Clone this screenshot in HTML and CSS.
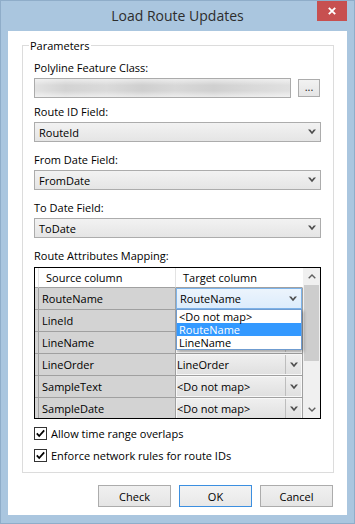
FILE: index.html
```html
<!DOCTYPE html>
<html>
<head>
<meta charset="utf-8">
<link rel="stylesheet" href="styles.css">
</head>
<body>
<div class="window">
  <div class="titlebar">
    <div class="title">Load Route Updates</div>
    <div class="close"><svg width="8" height="8" viewBox="0 0 8 8"><path d="M0.8 0.8L7.2 7.2M7.2 0.8L0.8 7.2" stroke="#fff" stroke-width="1.9"/></svg></div>
  </div>
  <div class="client">
    <fieldset class="group">
      <legend class="group-title">Parameters</legend>
      <div class="lbl">Polyline Feature Class:</div>
      <div class="filerow">
        <div class="textbox"></div>
        <div class="browse">...</div>
      </div>
      <div class="lbl">Route ID Field:</div>
      <div class="combo"><span class="combo-text">RouteId</span><svg class="chev" width="8" height="6" viewBox="0 0 8 6"><path d="M0 0.5h2.2L4 2.7 5.8 0.5H8L4 5.3z" fill="#4d4d4d"/></svg></div>
      <div class="lbl">From Date Field:</div>
      <div class="combo"><span class="combo-text">FromDate</span><svg class="chev" width="8" height="6" viewBox="0 0 8 6"><path d="M0 0.5h2.2L4 2.7 5.8 0.5H8L4 5.3z" fill="#4d4d4d"/></svg></div>
      <div class="lbl">To Date Field:</div>
      <div class="combo"><span class="combo-text">ToDate</span><svg class="chev" width="8" height="6" viewBox="0 0 8 6"><path d="M0 0.5h2.2L4 2.7 5.8 0.5H8L4 5.3z" fill="#4d4d4d"/></svg></div>
      <div class="lbl lbl-grid">Route Attributes Mapping:</div>
      <div class="grid">
        <div class="table">
          <div class="row head">
            <div class="rh"></div>
            <div class="hc src">Source column</div>
            <div class="hc tgt">Target column</div>
          </div>
          <div class="row">
            <div class="rh"></div>
            <div class="sc">RouteName</div>
            <div class="tc"><div class="editcombo"><span class="combo-text">RouteName</span><svg class="chev" width="8" height="6" viewBox="0 0 8 6"><path d="M0 0.5h2.2L4 2.7 5.8 0.5H8L4 5.3z" fill="#4d4d4d"/></svg></div></div>
          </div>
          <div class="row">
            <div class="rh"></div>
            <div class="sc">LineId</div>
            <div class="tc"><div class="ccell"><span class="ctext"></span><span class="cbtn"></span></div></div>
          </div>
          <div class="row">
            <div class="rh"></div>
            <div class="sc">LineName</div>
            <div class="tc"><div class="ccell"><span class="ctext"></span><span class="cbtn"></span></div></div>
          </div>
          <div class="row">
            <div class="rh"></div>
            <div class="sc">LineOrder</div>
            <div class="tc"><div class="ccell"><span class="ctext">LineOrder</span><span class="cbtn"><svg width="8" height="6" viewBox="0 0 8 6"><path d="M0 0.5h2.2L4 2.7 5.8 0.5H8L4 5.3z" fill="#4d4d4d"/></svg></span></div></div>
          </div>
          <div class="row">
            <div class="rh"></div>
            <div class="sc">SampleText</div>
            <div class="tc"><div class="ccell"><span class="ctext">&lt;Do not map&gt;</span><span class="cbtn"><svg width="8" height="6" viewBox="0 0 8 6"><path d="M0 0.5h2.2L4 2.7 5.8 0.5H8L4 5.3z" fill="#4d4d4d"/></svg></span></div></div>
          </div>
          <div class="row">
            <div class="rh"></div>
            <div class="sc">SampleDate</div>
            <div class="tc"><div class="ccell"><span class="ctext">&lt;Do not map&gt;</span><span class="cbtn"><svg width="8" height="6" viewBox="0 0 8 6"><path d="M0 0.5h2.2L4 2.7 5.8 0.5H8L4 5.3z" fill="#4d4d4d"/></svg></span></div></div>
          </div>
        </div>
        <div class="vscroll">
          <div class="sarrow"><svg width="8" height="5" viewBox="0 0 8 5"><path d="M0.7 4.3L4 1 7.3 4.3" fill="none" stroke="#606060" stroke-width="1.4"/></svg></div>
          <div class="thumb"></div>
          <div class="track"></div>
          <div class="sarrow"><svg width="8" height="5" viewBox="0 0 8 5"><path d="M0.7 0.7L4 4 7.3 0.7" fill="none" stroke="#606060" stroke-width="1.4"/></svg></div>
        </div>
        <div class="dropdown">
          <div class="ditem">&lt;Do not map&gt;</div>
          <div class="ditem sel">RouteName</div>
          <div class="ditem">LineName</div>
        </div>
      </div>
      <div class="check"><svg width="13" height="13" viewBox="0 0 13 13"><rect x="0.5" y="0.5" width="12" height="12" fill="#fff" stroke="#333"/><path d="M2.8 6.4L5.2 9 10.2 3.4" fill="none" stroke="#000" stroke-width="1.8"/></svg><span>Allow time range overlaps</span></div>
      <div class="check"><svg width="13" height="13" viewBox="0 0 13 13"><rect x="0.5" y="0.5" width="12" height="12" fill="#fff" stroke="#333"/><path d="M2.8 6.4L5.2 9 10.2 3.4" fill="none" stroke="#000" stroke-width="1.8"/></svg><span>Enforce network rules for route IDs</span></div>
    </fieldset>
    <div class="buttons">
      <div class="btn">Check</div>
      <div class="btn default">OK</div>
      <div class="btn">Cancel</div>
    </div>
  </div>
</div>
</body>
</html>
```

FILE: styles.css
```css
html, body {
  margin: 0;
  padding: 0;
}
body {
  width: 355px;
  height: 524px;
  overflow: hidden;
  font-family: "Open Sans", "Noto Sans", sans-serif;
  font-size: 11px;
  color: #000;
}
.window {
  box-sizing: border-box;
  width: 355px;
  height: 524px;
  border: 1px solid #8FADC9;
  background: #AAC6DF;
  display: flex;
  flex-direction: column;
}
.titlebar {
  flex: none;
  height: 30px;
  display: grid;
  grid-template-columns: 1fr auto 1fr;
}
.title {
  grid-column: 2;
  font-size: 14px;
  line-height: 29px;
  color: #2d2d2d;
  white-space: nowrap;
}
.close {
  grid-column: 3;
  justify-self: end;
  align-self: start;
  width: 30px;
  height: 20px;
  margin-right: 7px;
  background: #C75050;
  display: flex;
  align-items: center;
  justify-content: center;
}
.client {
  flex: 1;
  min-height: 0;
  margin: 0 7px 8px;
  background: #fff;
  display: flex;
  flex-direction: column;
}
.group {
  margin: 7px 13px 0 14px;
  padding: 7px 12px 9px 11px;
  border: 1px solid #DCDCDC;
  min-width: 0;
}
.group-title {
  padding: 0 1px;
  margin-left: -5px;
  line-height: 15px;
}
.lbl {
  height: 15px;
  line-height: 15px;
  margin-bottom: 3px;
  white-space: nowrap;
}
.lbl-grid {
  margin-bottom: 4px;
}
.filerow {
  display: flex;
  align-items: center;
  height: 20px;
  margin-bottom: 6px;
}
.textbox {
  box-sizing: border-box;
  width: 257px;
  height: 20px;
  border: 1px solid #ABABAB;
  background:
    linear-gradient(to bottom, rgba(255,255,255,0.55), rgba(255,255,255,0) 35%, rgba(255,255,255,0) 65%, rgba(255,255,255,0.55)),
    linear-gradient(90deg, #e2e2e2, #d3d3d3 12%, #dadada 28%, #cfcfcf 42%, #d8d8d8 55%, #d0d0d0 70%, #d9d9d9 85%, #e0e0e0);
}
.browse {
  box-sizing: border-box;
  width: 22px;
  height: 18px;
  margin-left: 7px;
  border: 1px solid #ACACAC;
  background: linear-gradient(#F2F2F2, #E5E5E5);
  text-align: center;
  line-height: 14px;
  color: #222;
}
.combo {
  box-sizing: border-box;
  height: 20px;
  margin-bottom: 10px;
  border: 1px solid #ACACAC;
  background: linear-gradient(#F2F2F2, #E5E5E5);
  display: flex;
  align-items: center;
  padding: 0 4px 0 4px;
}
.combo-text {
  flex: 1;
  white-space: nowrap;
}
.chev {
  display: block;
}
.grid {
  position: relative;
  box-sizing: border-box;
  height: 152px;
  border: 1px solid #000;
  display: flex;
  margin-bottom: 7px;
}
.table {
  flex: none;
  width: 268px;
  height: 150px;
  overflow: hidden;
}
.row {
  display: flex;
  height: 22px;
}
.row.head {
  height: 20px;
}
.rh {
  box-sizing: border-box;
  width: 4px;
  background: #D3D3D3;
  border-right: 1px solid #A0A0A0;
  border-bottom: 1px solid #A0A0A0;
}
.head .rh {
  background: #fff;
  border-right-color: #E3E3E3;
  border-bottom-color: #A0A0A0;
}
.hc {
  box-sizing: border-box;
  background: #fff;
  border-right: 1px solid #E3E3E3;
  border-bottom: 1px solid #A0A0A0;
  padding-left: 7px;
  line-height: 19px;
  white-space: nowrap;
}
.hc.src { width: 137px; }
.hc.tgt { width: 127px; border-right-color: #fff; }
.sc {
  box-sizing: border-box;
  width: 137px;
  background: #D3D3D3;
  border-right: 1px solid #A0A0A0;
  border-bottom: 1px solid #A0A0A0;
  padding-left: 3px;
  line-height: 21px;
  white-space: nowrap;
}
.tc {
  box-sizing: border-box;
  width: 127px;
  border-right: 1px solid #A0A0A0;
  border-bottom: 1px solid #A0A0A0;
  display: flex;
  background: #D3D3D3;
}
.ccell {
  flex: 1;
  display: flex;
  box-sizing: border-box;
  border: 1px solid #F8F8F8;
  background: linear-gradient(#EFEFEF, #E0E0E0);
}
.ctext {
  flex: 1;
  padding-left: 0;
  line-height: 19px;
  white-space: nowrap;
}
.cbtn {
  box-sizing: border-box;
  width: 16px;
  border-left: 1px solid #BDBDBD;
  display: flex;
  align-items: center;
  justify-content: center;
}
.editcombo {
  flex: 1;
  box-sizing: border-box;
  border: 1px solid #7EB4EA;
  background: linear-gradient(#ECF4FC, #DCECFC);
  display: flex;
  align-items: center;
  padding: 0 4px 0 3px;
}
.vscroll {
  flex: none;
  width: 17px;
  display: flex;
  flex-direction: column;
  background: #F0F0F0;
}
.sarrow {
  height: 17px;
  display: flex;
  align-items: center;
  justify-content: center;
}
.thumb {
  height: 76px;
  margin: 0 1px;
  background: #CDCDCD;
}
.track {
  flex: 1;
}
.dropdown {
  position: absolute;
  left: 141px;
  top: 41px;
  box-sizing: border-box;
  width: 126px;
  border: 1px solid #6F9CD0;
  background: #fff;
  box-shadow: 2px 2px 3px rgba(0,0,0,0.25);
}
.ditem {
  height: 13px;
  line-height: 13px;
  padding-left: 2px;
  white-space: nowrap;
}
.ditem.sel {
  background: #3399FF;
  color: #fff;
}
.check {
  display: flex;
  align-items: center;
  gap: 4px;
  height: 15px;
  line-height: 15px;
  white-space: nowrap;
}
.check + .check {
  margin-top: 7px;
}
.check svg {
  display: block;
  flex: none;
}
.buttons {
  display: flex;
  justify-content: flex-end;
  gap: 8px;
  margin: auto 14px 8px 0;
}
.btn {
  box-sizing: border-box;
  width: 73px;
  height: 22px;
  border: 1px solid #ACACAC;
  background: linear-gradient(#F0F0F0, #E5E5E5);
  display: flex;
  align-items: center;
  justify-content: center;
}
.btn.default {
  border-color: #3C8FE0;
  background: linear-gradient(#F3F3F3, #E8E8E8);
}
```
